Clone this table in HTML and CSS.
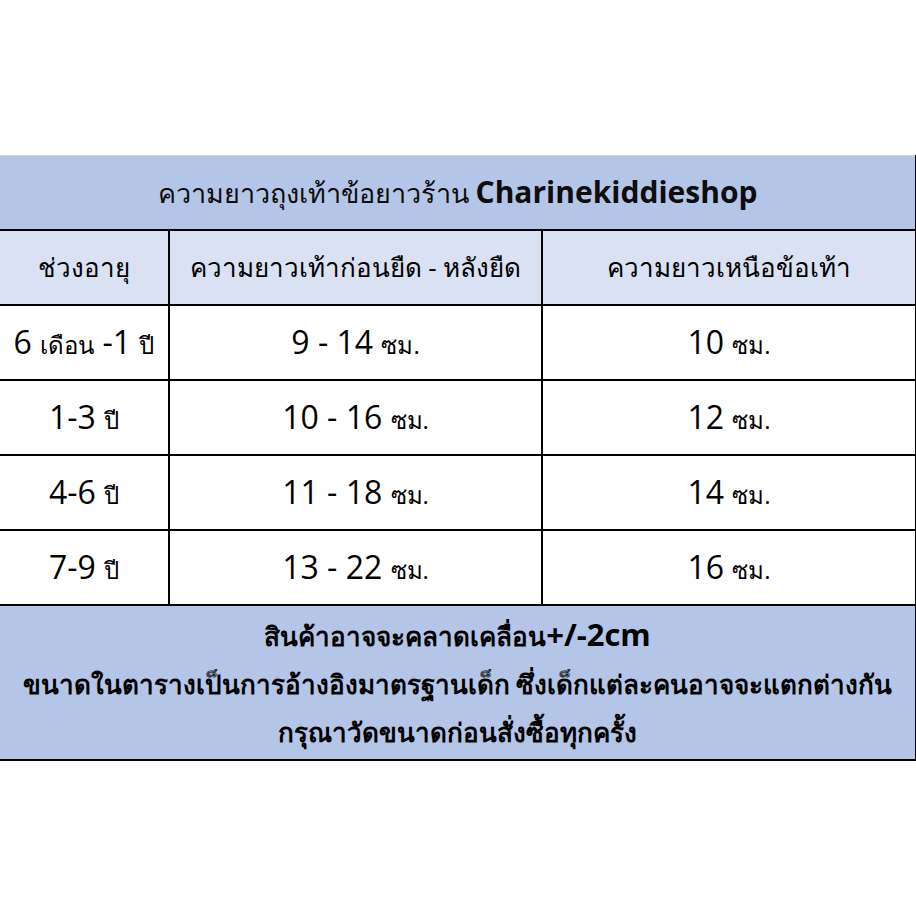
FILE: index.html
```html
<!DOCTYPE html>
<html lang="th">
<head>
<meta charset="utf-8">
<title>ความยาวถุงเท้าข้อยาว</title>
<link rel="stylesheet" href="styles.css">
</head>
<body>
<div class="page">
  <table class="size-table">
    <colgroup>
      <col class="col-age">
      <col class="col-foot">
      <col class="col-ankle">
    </colgroup>
    <tr class="title-row">
      <td colspan="3" class="title">ความยาวถุงเท้าข้อยาวร้าน <span class="shop">Charinekiddieshop</span></td>
    </tr>
    <tr class="head-row">
      <td>ช่วงอายุ</td>
      <td>ความยาวเท้าก่อนยืด - หลังยืด</td>
      <td>ความยาวเหนือข้อเท้า</td>
    </tr>
    <tr class="data-row">
      <td class="age">6 <span class="th">เดือน</span> -1 <span class="th">ปี</span></td>
      <td class="val">9 - 14 <span class="th">ซม.</span></td>
      <td class="val">10 <span class="th">ซม.</span></td>
    </tr>
    <tr class="data-row">
      <td class="age">1-3 <span class="th">ปี</span></td>
      <td class="val">10 - 16 <span class="th">ซม.</span></td>
      <td class="val">12 <span class="th">ซม.</span></td>
    </tr>
    <tr class="data-row">
      <td class="age">4-6 <span class="th">ปี</span></td>
      <td class="val">11 - 18 <span class="th">ซม.</span></td>
      <td class="val">14 <span class="th">ซม.</span></td>
    </tr>
    <tr class="data-row">
      <td class="age">7-9 <span class="th">ปี</span></td>
      <td class="val">13 - 22 <span class="th">ซม.</span></td>
      <td class="val">16 <span class="th">ซม.</span></td>
    </tr>
    <tr class="note-row">
      <td colspan="3" class="note">
        <div class="note-line">สินค้าอาจจะคลาดเคลื่อน<span class="tol">+/-2cm</span></div>
        <div class="note-line">ขนาดในตารางเป็นการอ้างอิงมาตรฐานเด็ก ซึ่งเด็กแต่ละคนอาจจะแตกต่างกัน</div>
        <div class="note-line">กรุณาวัดขนาดก่อนสั่งซื้อทุกครั้ง</div>
      </td>
    </tr>
  </table>
</div>
</body>
</html>
```

FILE: styles.css
```css
html, body {
  margin: 0;
  padding: 0;
  background: #ffffff;
}

.page {
  width: 916px;
  height: 916px;
  padding-top: 155px;
  box-sizing: border-box;
}

.size-table {
  width: 916px;
  border-collapse: collapse;
  table-layout: fixed;
  font-family: "Open Sans", "Noto Sans", sans-serif;
  color: #111111;
}

.col-age { width: 169px; }
.col-foot { width: 373px; }
.col-ankle { width: 374px; }

.size-table td {
  border: 2px solid #000000;
  text-align: center;
  vertical-align: middle;
  padding: 0;
  white-space: nowrap;
}

.size-table td:first-child {
  border-left: none;
}

.title {
  background: #b4c6e7;
  height: 73px;
  font-size: 27px;
  color: #0d0d0d;
  border-top: 1px solid #cfd6e2 !important;
}

.shop {
  font-weight: 700;
  font-size: 30px;
}

.head-row td {
  background: #d9e1f2;
  height: 73px;
  font-size: 26px;
  color: #000000;
}

.data-row td {
  height: 73px;
  background: #ffffff;
  font-size: 32px;
  color: #000000;
}

.th {
  font-size: 24px;
}

.note {
  background: #b4c6e7;
  height: 153px;
  font-weight: 700;
  font-size: 26px;
  color: #000000;
}

.note-line {
  line-height: 48px;
}

.tol {
  font-size: 31px;
}
```
